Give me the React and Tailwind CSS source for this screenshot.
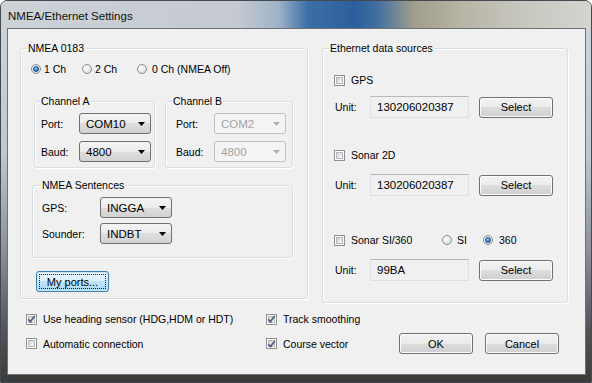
import React from 'react'

function Radio({ on }) {
  return (
    <span className="w-[10px] h-[10px] shrink-0 rounded-full border border-[#8e8f8f] bg-[radial-gradient(circle_at_40%_35%,#ffffff_0%,#e6e7e9_55%,#c9ccd0_100%)] flex items-center justify-center">
      {on && (
        <span className="w-[6px] h-[6px] rounded-full border border-[#1b4f8c] bg-[radial-gradient(circle_at_40%_35%,#9ad6fb_0%,#3b84cc_55%,#1a5396_100%)]" />
      )}
    </span>
  )
}

function Check({ checked }) {
  return (
    <span className="w-[11px] h-[11px] shrink-0 border border-[#8e8f8f] bg-white p-[1px] flex">
      <span className="flex-1 border border-[#b4b8bd] bg-[linear-gradient(135deg,#cdd1d6_0%,#eef0f2_70%,#f8f8f8_100%)] flex items-center justify-center">
        {checked && (
          <svg width="9" height="8" viewBox="0 0 9 8" className="-m-[2px]">
            <path d="M1.2 4.2 L3.4 6.6 L7.8 0.9" fill="none" stroke="#4d5e78" strokeWidth="1.7" />
          </svg>
        )}
      </span>
    </span>
  )
}

function CheckItem({ checked, label, className }) {
  return (
    <div className={className}>
      <div className="flex items-center h-[12px]">
        <Check checked={checked} />
        <span className="ml-[6px] leading-[12px] whitespace-nowrap">{label}</span>
      </div>
    </div>
  )
}

function Combo({ value }) {
  return (
    <div className="h-[21px] w-[72px] rounded-[3px] border border-[#707070] bg-[linear-gradient(to_bottom,#f4f4f4_0%,#ececec_50%,#dedede_50%,#d2d2d2_100%)] flex items-center pl-[6px] pr-[5px]">
      <span className="flex-1 leading-[12px] text-[11.5px]">{value}</span>
      <svg width="7" height="4" viewBox="0 0 7 4">
        <polygon points="0,0 7,0 3.5,4" fill="#000" />
      </svg>
    </div>
  )
}

function ComboOff({ value }) {
  return (
    <div className="h-[21px] w-[72px] rounded-[3px] border border-[#bcc0c4] bg-[#f4f4f4] flex items-center pl-[6px] pr-[5px]">
      <span className="flex-1 leading-[12px] text-[11.5px] text-[#a3a3a3]">{value}</span>
      <svg width="7" height="4" viewBox="0 0 7 4">
        <polygon points="0,0 7,0 3.5,4" fill="#b0b0b0" />
      </svg>
    </div>
  )
}

function Btn({ children, className }) {
  return (
    <div className={'h-[21px] w-[74px] rounded-[3px] border border-[#707070] bg-[linear-gradient(to_bottom,#f2f2f2_0%,#ebebeb_50%,#dddddd_50%,#cfcfcf_100%)] shadow-[inset_0_0_0_1px_#fcfcfc] flex items-center justify-center leading-[12px] text-[11px] ' + (className || '')}>
      {children}
    </div>
  )
}

function UnitRow({ value, className }) {
  return (
    <div className={'flex items-center ' + className}>
      <span className="w-[36px] pl-[1px] leading-[12px]">Unit:</span>
      <div className="h-[22px] w-[99px] border border-[#dbdfe6] border-t-[#b5b8bd] bg-[#f0f0f0] flex items-center pl-[6px] leading-[12px] text-[11.5px]">
        {value}
      </div>
      <Btn className="ml-[10px]">Select</Btn>
    </div>
  )
}

const groupBox = 'border border-[#d5dfe5] rounded-[3px] shadow-[inset_1px_1px_0_#ffffff,1px_1px_0_#ffffff] p-0 m-0 min-w-0'

export default function App() {
  return (
    <div className="w-[592px] h-[383px] overflow-hidden bg-white font-['Liberation_Sans',Arial,sans-serif] text-[10.5px] text-black">
      <div className="w-[592px] h-[383px] rounded-t-[7px] border border-[#454a50] bg-[linear-gradient(to_bottom,#cfd5db_0%,#c0c7ce_40%,#8e9297_65%,#55585c_85%,#3a3a3a_100%)] flex flex-col">
        {/* title bar */}
        <div className="h-[27px] rounded-t-[6px] bg-[linear-gradient(to_right,#cdd2d7_0%,#c4cad0_40%,#9fb3c8_47%,#3d6fa6_52%,#2b5e9c_60%,#4470a0_64%,#a29e8c_70%,#b7b4a6_78%,#c7c6be_88%,#d4d4d0_100%)] flex items-center pl-[7px]">
          <span className="text-[11.5px] leading-[14px] text-[#111] mt-[2px]">NMEA/Ethernet Settings</span>
        </div>

        {/* client area */}
        <div className="ml-[6px] w-[579px] h-[347px] border border-[#6b7177] bg-[#f0f0f0] flex flex-col">
          <div className="flex items-start mt-[12px] ml-[12px]">
            {/* NMEA 0183 */}
            <fieldset className={groupBox + ' w-[288px] h-[258px]'}>
              <legend className="ml-[6px] px-[1px] leading-[14px]">NMEA 0183</legend>
              <div className="pl-[10px] flex flex-col">
                <div className="flex items-center h-[12px] mt-[8px]">
                  <div className="flex items-center w-[51px]">
                    <Radio on />
                    <span className="ml-[3px] leading-[12px]">1 Ch</span>
                  </div>
                  <div className="flex items-center w-[55px]">
                    <Radio />
                    <span className="ml-[3px] leading-[12px]">2 Ch</span>
                  </div>
                  <div className="flex items-center">
                    <Radio />
                    <span className="ml-[5px] leading-[12px]">0 Ch (NMEA Off)</span>
                  </div>
                </div>

                <div className="flex items-start mt-[19px] ml-[3px] gap-[10px]">
                  <fieldset className={groupBox + ' w-[121px] h-[74px]'}>
                    <legend className="ml-[5px] px-[1px] leading-[14px]">Channel A</legend>
                    <div className="pl-[6px]">
                      <div className="flex items-center mt-[5px]">
                        <span className="w-[38px] leading-[12px]">Port:</span>
                        <Combo value="COM10" />
                      </div>
                      <div className="flex items-center mt-[7px]">
                        <span className="w-[38px] leading-[12px]">Baud:</span>
                        <Combo value="4800" />
                      </div>
                    </div>
                  </fieldset>
                  <fieldset className={groupBox + ' w-[128px] h-[74px]'}>
                    <legend className="ml-[6px] px-[1px] leading-[14px]">Channel B</legend>
                    <div className="pl-[10px]">
                      <div className="flex items-center mt-[5px]">
                        <span className="w-[38px] leading-[12px]">Port:</span>
                        <ComboOff value="COM2" />
                      </div>
                      <div className="flex items-center mt-[7px]">
                        <span className="w-[38px] leading-[12px]">Baud:</span>
                        <ComboOff value="4800" />
                      </div>
                    </div>
                  </fieldset>
                </div>

                <fieldset className={groupBox + ' w-[261px] h-[80px] mt-[10px] ml-[1px]'}>
                  <legend className="ml-[8px] px-[1px] leading-[14px]">NMEA Sentences</legend>
                  <div className="pl-[9px]">
                    <div className="flex items-center mt-[5px]">
                      <span className="w-[58px] leading-[12px]">GPS:</span>
                      <Combo value="INGGA" />
                    </div>
                    <div className="flex items-center mt-[5px]">
                      <span className="w-[58px] leading-[12px]">Sounder:</span>
                      <Combo value="INDBT" />
                    </div>
                  </div>
                </fieldset>

                <div className="mt-[13px] ml-[5px] h-[21px] w-[73px] rounded-[3px] border border-[#3c7fb1] bg-[linear-gradient(to_bottom,#eaf6fd_0%,#d9f0fc_50%,#bee6fd_50%,#a7d9f5_100%)] shadow-[inset_0_0_0_1px_#c8e8f8] p-[2px] flex">
                  <div className="flex-1 border border-dotted border-[#222] flex items-center justify-center leading-[12px] text-[11px]">
                    My ports...
                  </div>
                </div>
              </div>
            </fieldset>

            {/* Ethernet data sources */}
            <fieldset className={groupBox + ' w-[246px] h-[262px] ml-[14px]'}>
              <legend className="ml-[6px] px-[1px] leading-[14px]">Ethernet data sources</legend>
              <div className="pl-[11px] flex flex-col">
                <CheckItem label="GPS" className="mt-[19px]" />
                <UnitRow value="130206020387" className="mt-[10px]" />
                <CheckItem label="Sonar 2D" className="mt-[31px]" />
                <UnitRow value="130206020387" className="mt-[13px]" />
                <div className="flex items-center h-[12px] mt-[38px]">
                  <div className="flex items-center w-[108px]">
                    <Check />
                    <span className="ml-[6px] leading-[12px]">Sonar SI/360</span>
                  </div>
                  <div className="flex items-center w-[41px]">
                    <Radio />
                    <span className="ml-[5px] leading-[12px]">SI</span>
                  </div>
                  <div className="flex items-center">
                    <Radio on />
                    <span className="ml-[6px] leading-[12px]">360</span>
                  </div>
                </div>
                <UnitRow value="99BA" className="mt-[13px]" />
              </div>
            </fieldset>
          </div>

          {/* bottom options */}
          <div className="flex items-center h-[12px] mt-[10px] pl-[18px]">
            <CheckItem checked label="Use heading sensor (HDG,HDM or HDT)" className="w-[240px]" />
            <CheckItem checked label="Track smoothing" />
          </div>
          <div className="flex items-center h-[21px] mt-[8px] pl-[18px]">
            <CheckItem label="Automatic connection" className="w-[240px]" />
            <CheckItem checked label="Course vector" className="w-[133px]" />
            <Btn>OK</Btn>
            <Btn className="ml-[12px]">Cancel</Btn>
          </div>
        </div>
      </div>
    </div>
  )
}
